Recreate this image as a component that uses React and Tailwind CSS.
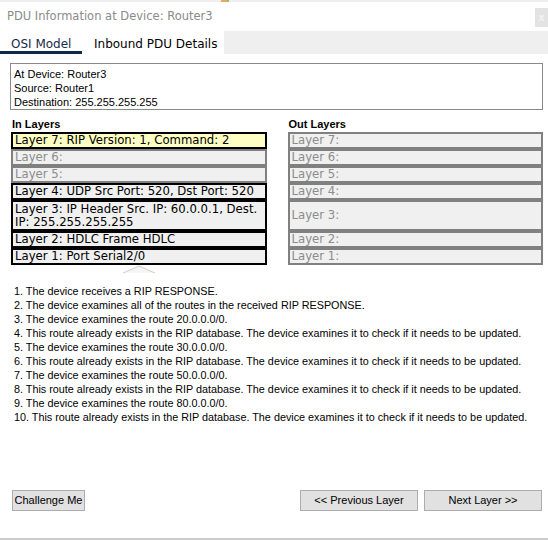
import React from 'react';

const IN_LAYERS = [
  { label: 'Layer 7: RIP Version: 1, Command: 2', state: 'selected' },
  { label: 'Layer 6:', state: 'off' },
  { label: 'Layer 5:', state: 'off' },
  { label: 'Layer 4: UDP Src Port: 520, Dst Port: 520', state: 'on' },
  { label: 'Layer 3: IP Header Src. IP: 60.0.0.1, Dest. IP: 255.255.255.255', state: 'on', tall: true },
  { label: 'Layer 2: HDLC Frame HDLC', state: 'on' },
  { label: 'Layer 1: Port Serial2/0', state: 'on' },
];

const OUT_LAYERS = ['Layer 7:', 'Layer 6:', 'Layer 5:', 'Layer 4:', 'Layer 3:', 'Layer 2:', 'Layer 1:'];

const STEPS = [
  '1. The device receives a RIP RESPONSE.',
  '2. The device examines all of the routes in the received RIP RESPONSE.',
  '3. The device examines the route 20.0.0.0/0.',
  '4. This route already exists in the RIP database. The device examines it to check if it needs to be updated.',
  '5. The device examines the route 30.0.0.0/0.',
  '6. This route already exists in the RIP database. The device examines it to check if it needs to be updated.',
  '7. The device examines the route 50.0.0.0/0.',
  '8. This route already exists in the RIP database. The device examines it to check if it needs to be updated.',
  '9. The device examines the route 80.0.0.0/0.',
  '10. This route already exists in the RIP database. The device examines it to check if it needs to be updated.',
];

const layerFont = { fontFamily: '"DejaVu Sans", Verdana, sans-serif' };

function LayerBox({ label, state, tall }) {
  const base = 'px-[2px] text-[11.7px] leading-[13px] flex items-center';
  const h = tall ? 'h-[31px]' : 'h-[17px]';
  let cls;
  if (state === 'selected') cls = 'bg-[#ffffc4] border-2 border-black text-black';
  else if (state === 'on') cls = 'bg-[#f0f0f0] border-2 border-black text-black';
  else cls = 'bg-[#f0f0f0] border-2 border-[#808080] text-[#8c8c8c]';
  return (
    <div className={`${base} ${h} ${cls}`} style={layerFont}>
      <span>{label}</span>
    </div>
  );
}

export default function App() {
  return (
    <div className="w-[548px] h-[540px] bg-white relative overflow-hidden font-['Liberation_Sans',Arial,sans-serif]">
      {/* top edge */}
      <div className="h-[2px] bg-[#f0f0f0] relative">
        <div className="absolute left-[221px] top-0 w-[6px] h-[2px] bg-[#f4a460]" />
        <div className="absolute left-[227px] top-0 w-[2px] h-[2px] bg-[#8cc070]" />
      </div>

      {/* title */}
      <div className="h-[29px] flex items-start justify-between">
        <div className="pl-[7px] pt-[6px] text-[#8a8a8a]" style={{ fontFamily: '"DejaVu Sans", Tahoma, sans-serif', fontSize: '11.5px' }}>
          PDU Information at Device: Router3
        </div>
        <div className="mt-[6px] w-[13px] h-[19px] bg-[#e3e3e3] flex items-center justify-center text-[#f4f4f4] text-[11px] font-bold">
          x
        </div>
      </div>

      {/* tabs */}
      <div className="flex h-[23px] bg-[#efefef]" style={layerFont}>
        <div className="w-[82px] bg-white relative text-[12px] text-[#1a2a4a] pl-[11px] pt-[4px]">
          OSI Model
          <div className="absolute left-0 right-0 bottom-0 h-[3px] bg-[#12284a]" />
        </div>
        <div className="w-[142px] bg-white text-[12px] text-black pl-[12px] pt-[4px]">Inbound PDU Details</div>
      </div>

      {/* info box */}
      <div className="ml-[10px] mr-[5px] mt-[9px] h-[47px] border border-[#8a8a8a] px-[3px] pt-[3px] text-[11px] leading-[14px] text-black">
        <div>At Device: Router3</div>
        <div>Source: Router1</div>
        <div>Destination: 255.255.255.255</div>
      </div>

      {/* layers */}
      <div className="flex mt-[7px] pl-[11px] pr-[5px]">
        <div className="w-[256px]">
          <div className="text-[11px] font-bold leading-[14px] h-[15px] pl-[1px]">In Layers</div>
          <div className="flex flex-col">
            {IN_LAYERS.map((l) => (
              <LayerBox key={l.label} {...l} />
            ))}
          </div>
          <div className="flex justify-center">
            <svg width="34" height="9" viewBox="0 0 34 9">
              <path d="M1 8 L17 1 L33 8" fill="#f5f5f5" stroke="#d0d0d0" strokeWidth="1" />
            </svg>
          </div>
        </div>
        <div className="w-[256px] ml-[21px]">
          <div className="text-[11px] font-bold leading-[14px] h-[15px] pl-[1px]">Out Layers</div>
          <div className="flex flex-col">
            {OUT_LAYERS.map((l) => (
              <LayerBox key={l} label={l} state="off" tall={l === 'Layer 3:'} />
            ))}
          </div>
        </div>
      </div>

      {/* steps */}
      <div className="pl-[14px] mt-[10px] text-[10.8px] leading-[14px] text-black">
        {STEPS.map((s) => (
          <div key={s}>{s}</div>
        ))}
      </div>

      {/* buttons */}
      <div className="absolute left-[12px] right-[6px] top-[490px] flex items-center text-[11px] leading-[13px]">
        <button className="h-[21px] w-[73px] bg-[#e1e1e1] border border-[#adadad] text-black">Challenge Me</button>
        <div className="flex-1" />
        <button className="h-[21px] w-[118px] bg-[#e1e1e1] border border-[#adadad] text-black">&lt;&lt; Previous Layer</button>
        <button className="h-[21px] w-[118px] ml-[6px] bg-[#e1e1e1] border border-[#adadad] text-black">Next Layer &gt;&gt;</button>
      </div>

      {/* bottom edge */}
      <div className="absolute left-0 right-0 bottom-0 h-[2px] bg-[#cccccc]" />
    </div>
  );
}
